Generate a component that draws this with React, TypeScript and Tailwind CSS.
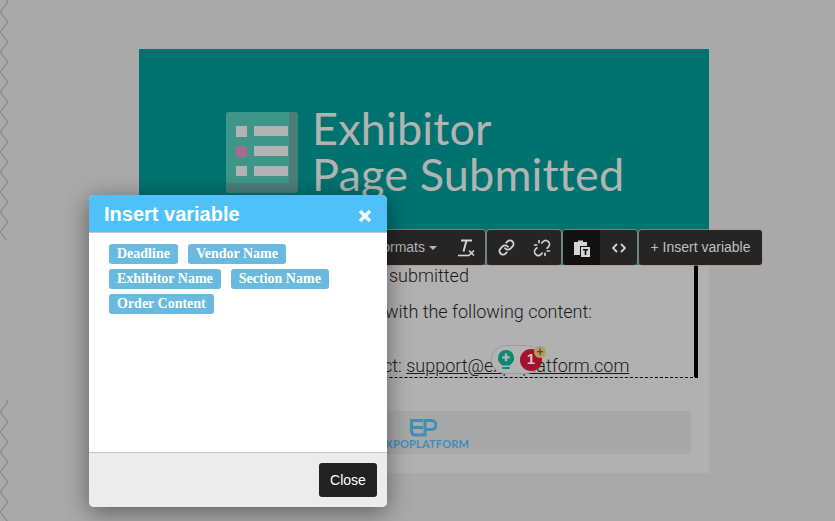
import { Link, Unlink } from 'lucide-react'

const tagRows = [
  ['Deadline', 'Vendor Name'],
  ['Exhibitor Name', 'Section Name'],
  ['Order Content'],
]

function Zigzag({ count }: { count: number }) {
  const points: string[] = []
  for (let i = 0; i <= count; i++) {
    points.push(`0,${i * 20 - 8}`, `8,${i * 20 + 2}`, `0,${i * 20 + 12}`)
  }
  return (
    <svg width="10" height={count * 20} className="block">
      <polyline points={points.join(' ')} fill="none" stroke="#8c8c8c" strokeWidth="1.3" />
    </svg>
  )
}

function ListLogo() {
  return (
    <svg width="72" height="81" viewBox="0 0 72 81" className="block">
      <rect width="72" height="81" rx="3" fill="#4a7f78" />
      <path d="M3 0h60v71H3a3 3 0 0 1-3-3V3a3 3 0 0 1 3-3z" fill="#3e9688" />
      <rect x="10" y="14" width="11" height="11" fill="#b3b3b3" />
      <rect x="10" y="34" width="11" height="11" fill="#aa6a90" />
      <rect x="10" y="54" width="11" height="10" fill="#b3b3b3" />
      <rect x="28" y="14" width="34" height="10" fill="#b3b3b3" />
      <rect x="28" y="34" width="34" height="10" fill="#b3b3b3" />
      <rect x="28" y="54" width="34" height="10" fill="#b3b3b3" />
    </svg>
  )
}

function ClearFormatIcon() {
  return (
    <svg width="17" height="19" viewBox="0 0 17 19" className="block" fill="none" stroke="#d4d4d4">
      <path d="M3 2.500h11" strokeWidth="2" />
      <path d="M8.500 2.500L5.500 13.500" strokeWidth="2" />
      <path d="M0 17.500h11" strokeWidth="1.600" />
      <path d="M11 12.500l5 5M16 12.500l-5 5" strokeWidth="1.600" />
    </svg>
  )
}

function PasteIcon() {
  return (
    <svg width="17" height="18" viewBox="0 0 17 18" className="block">
      <path d="M1 3h4V1.500h5V3h4v4H7v9H1z" fill="#d4d4d4" />
      <rect x="8" y="8" width="9" height="10" fill="#d4d4d4" />
      <path d="M10 10h5v1.600h-1.700V16h-1.600v-4.400H10z" fill="#111" />
    </svg>
  )
}

function Toolbar() {
  const group = 'flex h-full items-center rounded-[3px] bg-[#252525] shadow-[0_0_0_1px_rgba(190,145,125,0.6)]'
  return (
    <div className="absolute left-[300px] top-[230px] flex h-[35px] gap-[2px]">
      <div className={`${group} w-[185px] justify-end pr-[10px]`}>
        <span className="text-[14px] text-[#b5b5b5] font-['Liberation_Sans',sans-serif]">Formats</span>
        <span className="ml-[4px] mr-[21px] border-x-[4px] border-t-[4px] border-x-transparent border-t-[#b5b5b5]" />
        <ClearFormatIcon />
      </div>
      <div className={`${group} w-[74px] justify-around pl-[2px] pr-[1px] text-[#d4d4d4]`}>
        <Link size={17} strokeWidth={2.6} />
        <Unlink size={18} strokeWidth={2.2} />
      </div>
      <div className={`${group} w-[74px] overflow-hidden`}>
        <div className="flex h-full w-[37px] items-center justify-center bg-[#111]">
          <PasteIcon />
        </div>
        <div className="flex h-full w-[37px] items-center justify-center text-[#d4d4d4]">
          <svg width="14" height="10" viewBox="0 0 14 10" fill="none" stroke="currentColor" strokeWidth="1.8">
            <path d="M5 1L1 5l4 4M9 1l4 4-4 4" />
          </svg>
        </div>
      </div>
      <div className={`${group} w-[123px] justify-center text-[14px] text-[#c0c0c0] font-['Liberation_Sans',sans-serif]`}>
        + Insert variable
      </div>
    </div>
  )
}

function GrammarBubble() {
  return (
    <div className="absolute left-[491px] top-[345px] flex h-[29px] w-[50px] items-center rounded-full border border-[#9b9ba5] bg-[#b3b3b3] pl-[6px]">
      <svg width="16" height="19" viewBox="0 0 16 19" className="block shrink-0">
        <path d="M8 0a8 8 0 0 1 4 14.900V15.500H4v-.6A8 8 0 0 1 8 0z" fill="#0a8a72" />
        <path d="M6.800 3.500h2.400v2.700h2.700v2.400H9.200v2.700H6.800V8.600H4.100V6.200h2.700z" fill="#b3b3b3" />
        <rect x="4" y="17" width="8" height="2" rx="1" fill="#0a8a72" />
      </svg>
      <div className="ml-[6px] flex h-[22px] w-[22px] shrink-0 items-center justify-center rounded-full bg-[#a6112e] text-[15px] font-bold text-[#c9c9c9] font-['Liberation_Sans',sans-serif]">
        1
      </div>
      <div className="absolute right-[-6px] top-[0px] flex h-[12px] w-[12px] items-center justify-center rounded-full bg-[#b39b63] text-[12px] leading-none font-bold text-[#5a4a20] font-['Liberation_Sans',sans-serif]">
        +
      </div>
    </div>
  )
}

function InsertVariableModal() {
  return (
    <div className="absolute left-[89px] top-[195px] flex h-[312px] w-[298px] flex-col overflow-hidden rounded-[5px] bg-white shadow-[0_5px_25px_rgba(0,0,0,0.45)]">
      <div className="flex h-[38px] shrink-0 items-center justify-between border-b border-[#c8c8c8] bg-[#4fc0f8] pl-[15px] pr-[15px]">
        <span className="text-[20px] font-bold text-white font-['Liberation_Sans',sans-serif]">Insert variable</span>
        <svg width="14" height="14" viewBox="0 0 14 14" className="mt-[4px]" stroke="#f1f5f8" strokeWidth="3.800">
          <path d="M2 2l10 10M12 2L2 12" />
        </svg>
      </div>
      <div className="flex-1 px-[20px] pt-[11px]">
        {tagRows.map((row) => (
          <div key={row[0]} className="mb-[5px] flex h-[20px] gap-[10px]">
            {row.map((tag) => (
              <span
                key={tag}
                className="flex items-center rounded-[3px] bg-[#6abadf] px-[8px] pb-[1px] text-[14px] font-bold text-white font-['Liberation_Serif',serif]"
              >
                {tag}
              </span>
            ))}
          </div>
        ))}
      </div>
      <div className="flex h-[55px] shrink-0 items-center justify-end border-t border-[#c4c4c4] bg-[#ececec] pr-[10px]">
        <button className="h-[34px] w-[58px] rounded-[3px] bg-[#222] text-[14px] text-white font-['Liberation_Sans',sans-serif]">
          Close
        </button>
      </div>
    </div>
  )
}

export default function App() {
  return (
    <div className="relative h-[521px] w-[835px] overflow-hidden bg-[#a9a9a9]">
      <div className="absolute left-0 top-0">
        <Zigzag count={12} />
      </div>
      <div className="absolute left-0 top-[400px]">
        <Zigzag count={7} />
      </div>

      <div className="pl-[139px] pt-[49px]">
        <div className="h-[424px] w-[570px] bg-[#b1b1b1]">
          <div className="flex h-[216px] items-start bg-[#007370] pl-[87px] pt-[63px]">
            <ListLogo />
            <div className="ml-[14px] mt-[-7px] whitespace-nowrap text-[45px] leading-[46px] tracking-[0.15px] text-[#b3b3b3] font-['Lato',sans-serif]">
              Exhibitor
              <br />
              Page Submitted
            </div>
          </div>
          <div className="h-[113px] w-[559px] border-b border-r-[4px] border-dashed border-b-black border-r-black [border-right-style:solid] pl-[250px] text-[18px] font-light text-[#1a1a1a] font-['Roboto',sans-serif]">
            <div className="h-[36px] leading-[22px]">submitted</div>
            <div className="ml-[-4px] h-[54px] leading-[22px]">with the following content:</div>
            <div className="ml-[-6px] whitespace-nowrap leading-[22px]">
              ct: <span className="underline">support@expoplatform.com</span>
            </div>
          </div>
          <div className="mt-[33px] flex h-[43px] w-[552px] flex-col items-center rounded-[3px] bg-[#a8a8a8] pt-[8px]">
            <div className="ml-[18px] flex flex-col items-center">
              <svg width="27" height="18" viewBox="0 0 27 18" className="block" fill="none" stroke="#3d8fb8" strokeWidth="3">
                <path d="M13 1.500H1.500V12q0 4 4 4H15V1.500h6.500a4.500 4.500 0 0 1 0 9H15" />
                <path d="M1.500 8.500H13" />
              </svg>
              <span className="mt-[1px] text-[11px] leading-[12px] font-bold tracking-[0.2px] text-[#3d8fb8] font-['Lato',sans-serif]">
                EXPOPLATFORM
              </span>
            </div>
          </div>
        </div>
      </div>

      <Toolbar />
      <GrammarBubble />
      <InsertVariableModal />
    </div>
  )
}
